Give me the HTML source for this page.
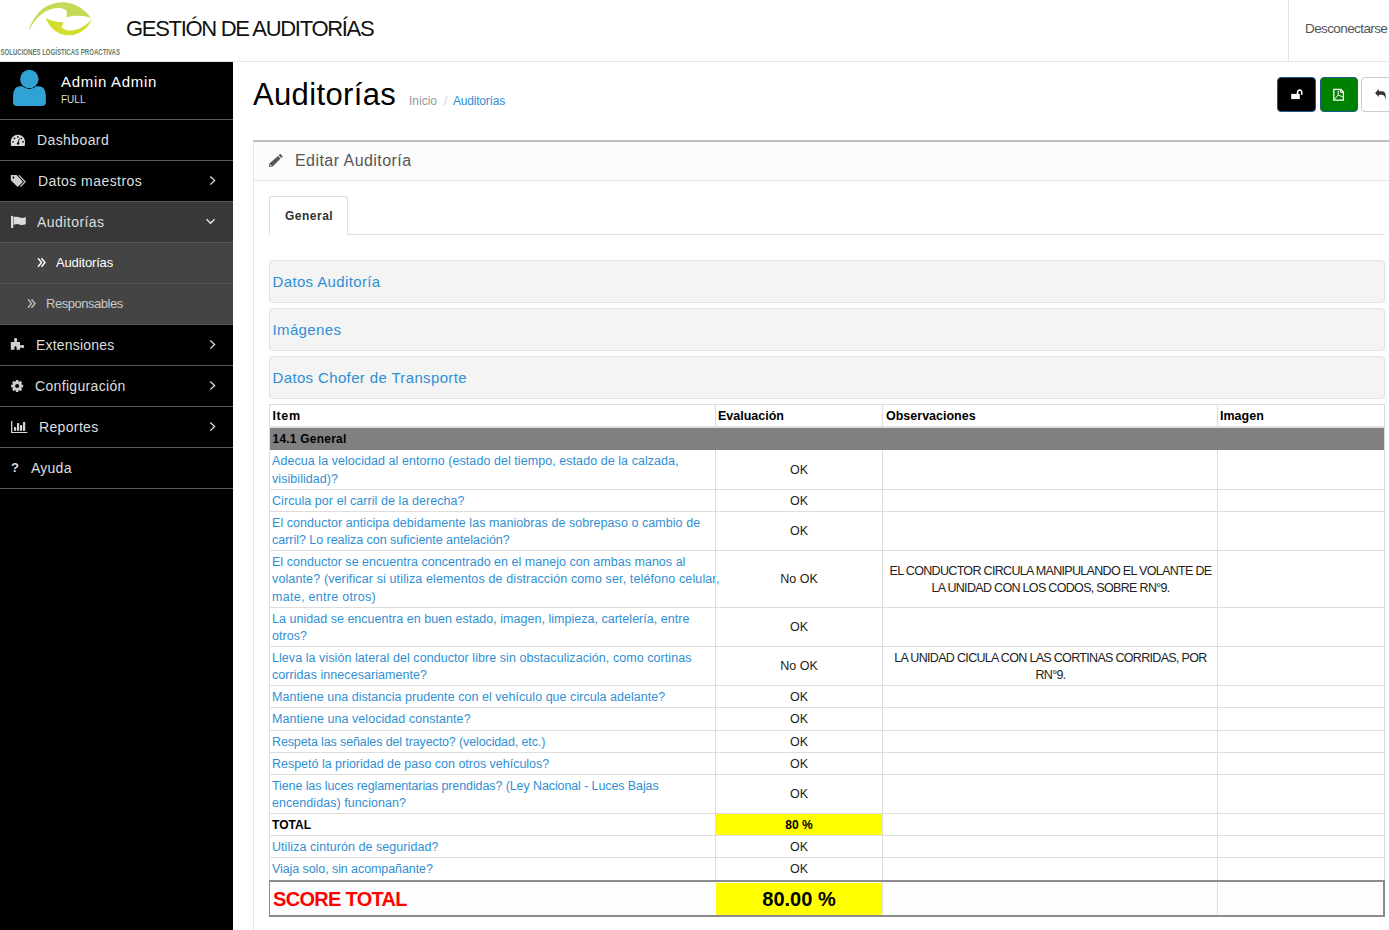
<!DOCTYPE html>
<html><head><meta charset="utf-8">
<style>
*{box-sizing:border-box;margin:0;padding:0}
html,body{width:1389px;height:930px;overflow:hidden;background:#fff;font-family:"Liberation Sans",sans-serif;color:#333}
.abs{position:absolute;white-space:nowrap}
#sb{position:absolute;left:0;top:62px;width:233px;height:868px;background:#000}
.mi{position:absolute;left:0;width:233px;height:41px;border-bottom:1px solid #595959;background:#000}
.mi .t{position:absolute;white-space:nowrap;color:#dedede;font-size:14px;line-height:16px}
.mi svg{position:absolute}
.acc{position:absolute;left:269px;width:1116px;height:43px;background:#f4f4f4;border:1px solid #e2e2e2;border-radius:4px}
.acc span{position:absolute;left:2.5px;top:12px;letter-spacing:0.36px;font-size:15px;line-height:18px;color:#2f8fd3;white-space:nowrap}
.tl{position:absolute;left:269px;width:1116px;height:1px;background:#ddd}
.vl{position:absolute;width:1px;background:#ddd}
.hrow{position:absolute;left:269px;width:1116px}
.hrow span{position:absolute;top:4px;font-size:12.5px;line-height:15px;font-weight:bold;color:#000;white-space:nowrap}
.grp{letter-spacing:0.22px;font-size:12px;line-height:15px;font-weight:bold;color:#000}
.row{position:absolute;left:269px;width:1116px;border-bottom:1px solid #ddd}
.row>div{position:absolute;top:0;bottom:0;display:flex;align-items:center;font-size:12.5px;line-height:17.5px;white-space:nowrap}
.row span{position:relative;top:1px}
.row i{font-style:normal}
.row .c1{left:3px;width:443px;color:#308fd3;letter-spacing:0.06px}
.row .c2{left:447px;width:166px;justify-content:center;color:#222}
.row .c3{left:614px;width:335px;justify-content:center;text-align:center;color:#222;letter-spacing:-0.68px}
.row .c4{left:949px;width:166px}
.row.tot .c1{color:#000;font-weight:bold;font-size:12px}
.row.tot .c2{background:#ff0;font-weight:bold;font-size:12px;color:#000;left:447px;width:166px}
.score{letter-spacing:-0.7px;font-size:20px;line-height:24px;font-weight:bold;color:#f00}
.scorev{font-size:20px;line-height:24px;font-weight:bold;color:#000}
</style></head><body>

<!-- header -->
<div class="abs" style="left:0;top:61px;width:1389px;height:1px;background:#e6e6e6"></div>
<div class="abs" style="left:1288px;top:0;width:1px;height:61px;background:#e3e3e3"></div>
<div class="abs" id="title" style="left:126px;top:17px;font-size:22px;line-height:24px;color:#111;letter-spacing:-1.3px">GESTIÓN DE AUDITORÍAS</div>
<div class="abs" id="desc" style="left:1305px;top:21px;font-size:13.5px;line-height:15px;color:#555;letter-spacing:-0.6px">Desconectarse</div>

<!-- sidebar -->
<div id="sb"></div>
<div class="mi" style="top:62px;height:58px"></div>
<div class="abs" style="left:61px;top:73px;font-size:15px;line-height:17px;color:#fff;letter-spacing:0.7px">Admin Admin</div>
<div class="abs" style="left:61px;top:94px;font-size:10px;line-height:11px;color:#ddd">FULL</div>

<div class="mi" style="top:120px"><span class="t" style="left:37px;top:12px;letter-spacing:0.4px">Dashboard</span></div>
<div class="mi" style="top:161px"><span class="t" style="left:38px;top:12px;letter-spacing:0.44px">Datos maestros</span></div>
<div class="mi" style="top:202px;background:#383838;border-color:#575757"><span class="t" style="left:37px;top:12px;letter-spacing:0.45px">Auditorías</span></div>
<div class="mi" style="top:243px;background:#444;border-color:#505050"><span class="t" style="left:56px;top:12px;color:#fff;font-size:13px;letter-spacing:-0.15px">Auditorías</span></div>
<div class="mi" style="top:284px;background:#444;border-color:#575757"><span class="t" style="left:46px;top:12px;color:#c8c8c8;font-size:13px;letter-spacing:-0.47px">Responsables</span></div>
<div class="mi" style="top:325px"><span class="t" style="left:36px;top:12px;letter-spacing:0.2px">Extensiones</span></div>
<div class="mi" style="top:366px"><span class="t" style="left:35px;top:12px;letter-spacing:0.33px">Configuración</span></div>
<div class="mi" style="top:407px"><span class="t" style="left:39px;top:12px;letter-spacing:0.35px">Reportes</span></div>
<div class="mi" style="top:448px"><span class="t" style="left:31px;top:12px;letter-spacing:0.25px">Ayuda</span></div>

<!-- content -->
<div class="abs" id="ptitle" style="left:253px;top:79px;font-size:31px;line-height:32px;color:#000;letter-spacing:0.35px">Auditorías</div>
<div class="abs" style="left:409px;top:94px;font-size:12px;line-height:14px;color:#999">Inicio</div>
<div class="abs" style="left:444px;top:94px;font-size:12px;line-height:14px;color:#ccc">/</div>
<div class="abs" style="left:453px;top:94px;font-size:12px;line-height:14px;color:#308fd3;letter-spacing:-0.2px">Auditorías</div>

<div class="abs" style="left:1277px;top:77px;width:39px;height:35px;background:#000;border:1px solid #1d5c8c;border-radius:4px"></div>
<div class="abs" style="left:1320px;top:77px;width:38px;height:35px;background:#008000;border:1px solid #1d5c8c;border-radius:4px"></div>
<div class="abs" style="left:1361px;top:77px;width:40px;height:35px;background:#fff;border:1px solid #ccc;border-radius:4px"></div>

<!-- portlet -->
<div class="abs" style="left:253px;top:140px;width:1136px;height:790px;border-left:1px solid #e5e5e5;border-top:2px solid #bdbdbd"></div>
<div class="abs" style="left:254px;top:142px;width:1135px;height:39px;background:#fcfcfc;border-bottom:1px solid #e5e5e5"></div>
<div class="abs" style="left:295px;top:152px;font-size:16px;line-height:18px;color:#555;letter-spacing:0.45px">Editar Auditoría</div>

<div class="abs" style="left:269px;top:234px;width:1116px;height:1px;background:#ddd"></div>
<div class="abs" style="left:269px;top:196px;width:79px;height:39px;background:#fff;border:1px solid #ddd;border-bottom:none;border-radius:3px 3px 0 0"></div>
<div class="abs" style="left:285px;top:209px;font-size:12px;line-height:14px;font-weight:bold;color:#333;letter-spacing:0.5px">General</div>

<div class="acc" style="top:260px"><span>Datos Auditoría</span></div>
<div class="acc" style="top:308px"><span>Imágenes</span></div>
<div class="acc" style="top:356px"><span>Datos Chofer de Transporte</span></div>

<!-- ICONS -->
<svg class="abs" style="left:0;top:0" width="130" height="62" viewBox="0 0 130 62">
 <path fill="#c6d957" d="M28.8,31.2 C29.5,25 36,14 43,8.6 C49,4.5 55,2.4 62.6,2.3 C72,2.2 84,8 90.9,17.9 C85,15.3 74,14.8 66.1,17.3 C66.8,14.8 67.3,12.5 66.4,10.2 C63,8.5 60,7.9 58.9,8.1 C48,8.2 36,15 28.8,31.2 Z"/>
 <path fill="#d3dd2e" d="M45.6,17.9 C50,20.3 56,22 63.9,22.4 C62.8,24 62,25.6 61.5,27.1 C64,29.8 67,30.7 70,30.6 C79,30.5 87,25 92,19 C89,27 80,35.2 69.5,35.3 C57,35.2 49,27 45.6,17.9 Z"/>
 <text x="0.5" y="55.4" font-family="Liberation Sans" font-weight="bold" font-size="8.2" fill="#667a66" textLength="119.5" lengthAdjust="spacingAndGlyphs">SOLUCIONES LOGÍSTICAS PROACTIVAS</text>
</svg>
<svg class="abs" style="left:0;top:62px" width="60" height="57" viewBox="0 62 60 57">
 <path fill="#30a2d3" d="M13,99 C13,92 14,86.2 20.5,86.2 L38.5,86.2 C45,86.2 45.9,92 45.9,99 L45.9,102 C45.9,104.5 44.5,106 42,106 L17,106 C14.5,106 13,104.5 13,102 Z"/>
 <circle cx="29.3" cy="78.9" r="10" fill="#000"/>
 <circle cx="29.3" cy="78.9" r="9.2" fill="#30a2d3"/>
</svg>
<!-- dashboard -->
<svg class="abs" style="left:8px;top:130px" width="22" height="20" viewBox="0 0 22 20">
 <path fill="#dcdcdc" d="M3.2,16 C2.9,15 2.8,13 2.8,11.8 C2.8,7.8 6,4.7 9.9,4.7 C13.8,4.7 17,7.8 17,11.8 C17,13 16.9,15 16.6,16 Z"/>
 <g fill="#000"><circle cx="6.5" cy="8.4" r="0.85"/><circle cx="9.9" cy="6.9" r="0.85"/><circle cx="13.3" cy="8.4" r="0.85"/><circle cx="5" cy="11.8" r="0.85"/><circle cx="15" cy="11.8" r="0.85"/><circle cx="10.1" cy="13.5" r="1.25"/></g>
 <path stroke="#000" stroke-width="0.9" d="M10.1,13.5 L11.3,8.6"/>
</svg>
<!-- tag -->
<svg class="abs" style="left:8px;top:171px" width="22" height="20" viewBox="0 0 22 20">
 <path fill="#cfcfcf" d="M2.8,4.1 L8.6,4.1 L15,10.75 L9.7,15.9 L2.8,9.2 Z"/>
 <circle cx="5.4" cy="6.5" r="0.9" fill="#000"/>
 <path fill="none" stroke="#cfcfcf" stroke-width="1.2" d="M10.9,4.4 L17.1,10.75 L12.4,15.6"/>
</svg>
<!-- flag -->
<svg class="abs" style="left:8px;top:212px" width="22" height="20" viewBox="0 0 22 20">
 <rect x="3" y="3.9" width="2.2" height="12.1" fill="#dcdcdc"/>
 <path fill="#dcdcdc" d="M5.6,4.9 C8,4.4 10,4.6 12,5.6 C14,6.4 16,5.6 17.8,4.9 L17.8,12.2 C16,12.9 14,13.5 12,12.7 C10,11.8 8,11.9 5.6,12.9 Z"/>
</svg>
<!-- sub chevrons -->
<svg class="abs" style="left:26px;top:252px" width="24" height="20" viewBox="0 0 24 20">
 <path fill="none" stroke="#fff" stroke-width="1.5" d="M12,6.2 L15.5,10.5 L12,14.8 M15.5,6.2 L19,10.5 L15.5,14.8"/>
</svg>
<svg class="abs" style="left:16px;top:293px" width="24" height="20" viewBox="0 0 24 20">
 <path fill="none" stroke="#bdbdbd" stroke-width="1.4" d="M12,6.2 L15.5,10.5 L12,14.8 M15.5,6.2 L19,10.5 L15.5,14.8"/>
</svg>
<!-- puzzle -->
<svg class="abs" style="left:8px;top:335px" width="22" height="20" viewBox="0 0 22 20">
 <path fill="#cfcfcf" d="M2.8,7.1 L6.3,7.1 L6.3,5.5 C5.7,5 5.8,3 7.6,3 C9.4,3 9.5,5 8.9,5.5 L8.9,7.1 L12,7.1 L12,10.2 L14,10.2 C14.6,9.7 16.2,10 16.2,11.5 C16.2,13 14.6,13.3 14,12.8 L12,12.8 L12,14.8 L8.6,14.8 L8.6,12.5 C8.6,11.6 8,11.2 7.5,11.2 C7,11.2 6.5,11.6 6.5,12.5 L6.5,14.8 L2.8,14.8 Z"/>
</svg>
<!-- gear -->
<svg class="abs" style="left:8px;top:376px" width="22" height="20" viewBox="0 0 22 20">
 <g transform="translate(9.1,10)" fill="#cfcfcf">
  <circle r="4.7"/>
  <rect x="-1.3" y="-6" width="2.6" height="12"/>
  <rect x="-1.3" y="-6" width="2.6" height="12" transform="rotate(45)"/>
  <rect x="-1.3" y="-6" width="2.6" height="12" transform="rotate(90)"/>
  <rect x="-1.3" y="-6" width="2.6" height="12" transform="rotate(135)"/>
  <circle r="2" fill="#000"/>
 </g>
</svg>
<!-- chart -->
<svg class="abs" style="left:8px;top:417px" width="22" height="20" viewBox="0 0 22 20" fill="#d6d6d6">
 <rect x="3" y="4.1" width="1.3" height="11.9"/><rect x="3" y="15" width="16.4" height="1"/>
 <rect x="6" y="10.1" width="2.2" height="3.7"/><rect x="9" y="6.1" width="2.2" height="7.7"/><rect x="12" y="8.1" width="2.2" height="5.7"/><rect x="15" y="5" width="2.2" height="8.8"/>
</svg>
<!-- question -->
<div class="abs" style="left:11px;top:460px;font-size:13px;line-height:16px;font-weight:bold;color:#ddd">?</div>
<!-- right chevrons -->
<svg class="abs" style="left:200px;top:161px" width="24" height="240" viewBox="0 0 24 240">
 <g fill="none" stroke="#e0e0e0" stroke-width="1.3">
 <path d="M10.3,15.5 L14.6,19.5 L10.3,23.6"/>
 <path d="M10.3,179.5 L14.6,183.5 L10.3,187.6"/>
 <path d="M10.3,220.5 L14.6,224.5 L10.3,228.6"/>
 </g>
</svg>
<svg class="abs" style="left:200px;top:407px" width="24" height="40" viewBox="0 0 24 40">
 <path fill="none" stroke="#e0e0e0" stroke-width="1.3" d="M10.3,15.5 L14.6,19.5 L10.3,23.6"/>
</svg>
<svg class="abs" style="left:200px;top:212px" width="24" height="20" viewBox="0 0 24 20">
 <path fill="none" stroke="#e8e8e8" stroke-width="1.4" d="M6.5,7.3 L10.5,11.3 L14.6,7.3"/>
</svg>
<!-- pencil -->
<svg class="abs" style="left:264px;top:150px" width="24" height="20" viewBox="0 0 24 20">
 <path fill="#555" d="M16.2,3.8 L18.8,6.4 L17.3,7.9 L14.7,5.3 Z"/>
 <path fill="#555" d="M14,6 L16.6,8.6 L8.6,16.6 L5,17 L5.4,13.4 Z"/>
 <path fill="#fafafa" d="M6.2,14.2 L7.8,15.8 L6.1,16 Z"/>
</svg>
<!-- button icons -->
<svg class="abs" style="left:1286px;top:84px" width="24" height="20" viewBox="0 0 24 20">
 <rect x="5.2" y="9.9" width="8.6" height="5.2" fill="#fff"/>
 <path fill="none" stroke="#fff" stroke-width="1.6" d="M11.5,10 L11.5,9 C11.5,7 12.2,6 13.65,6 C15.1,6 15.8,7 15.8,9 L15.8,10.7"/>
</svg>
<svg class="abs" style="left:1327px;top:84px" width="24" height="20" viewBox="0 0 24 20">
 <path fill="none" stroke="#fff" stroke-width="1.3" d="M6.8,5.3 L13.8,5.3 L16.4,8 L16.4,16.2 L6.8,16.2 Z"/>
 <path fill="none" stroke="#fff" stroke-width="1" d="M13.4,5.5 L13.4,8.3 L16.2,8.3 M11.2,6.5 L11.2,11 L15.6,12.8 M11.2,11 L7.5,15.2"/>
</svg>
<svg class="abs" style="left:1365px;top:84px" width="24" height="20" viewBox="0 0 24 20">
 <path fill="#333" d="M10.1,9 L13.8,4.9 L13.8,7.2 L17,7.2 C19.8,7.3 21.2,9.5 20.8,15.5 C20,12 18.8,10.8 16.5,10.8 L13.8,10.8 L13.8,12.9 Z"/>
</svg>
<!-- /ICONS -->
<!-- TABLE -->
<div class="tl" style="top:404px"></div>
<div class="hrow" style="top:405px;height:21px"><span style="left:3.5px;letter-spacing:0.6px">Item</span><span style="left:449px">Evaluación</span><span style="left:617px">Observaciones</span><span style="left:951px">Imagen</span></div>
<div class="abs" style="left:269px;top:426px;width:1116px;height:2px;background:#e0e0e0"></div>
<div class="abs" style="left:270px;top:428px;width:1114px;height:22px;background:#808080"></div>
<div class="abs grp" style="left:272.5px;top:432px">14.1 General</div>
<div class="row" style="top:450px;height:40px"><div class="c1"><span>Adecua la velocidad al entorno (estado del tiempo, estado de la calzada,<br>visibilidad)?</span></div><div class="c2"><span>OK</span></div><div class="c3"></div><div class="c4"></div></div>
<div class="row" style="top:490px;height:22px"><div class="c1"><span>Circula por el carril de la derecha?</span></div><div class="c2"><span>OK</span></div><div class="c3"></div><div class="c4"></div></div>
<div class="row" style="top:512px;height:39px"><div class="c1"><span>El conductor anticipa debidamente las maniobras de sobrepaso o cambio de<br><i style="letter-spacing:-0.030px">carril? Lo realiza con suficiente antelación?</i></span></div><div class="c2"><span>OK</span></div><div class="c3"></div><div class="c4"></div></div>
<div class="row" style="top:551px;height:57px"><div class="c1"><span><i style="letter-spacing:0.030px">El conductor se encuentra concentrado en el manejo con ambas manos al</i><br><i style="letter-spacing:0.127px">volante? (verificar si utiliza elementos de distracción como ser, teléfono celular,</i><br><i style="letter-spacing:0.290px">mate, entre otros)</i></span></div><div class="c2"><span>No OK</span></div><div class="c3"><span>EL CONDUCTOR CIRCULA MANIPULANDO EL VOLANTE DE<br>LA UNIDAD CON LOS CODOS, SOBRE RN°9.</span></div><div class="c4"></div></div>
<div class="row" style="top:608px;height:39px"><div class="c1"><span><i style="letter-spacing:0.025px">La unidad se encuentra en buen estado, imagen, limpieza, cartelería, entre</i><br>otros?</span></div><div class="c2"><span>OK</span></div><div class="c3"></div><div class="c4"></div></div>
<div class="row" style="top:647px;height:39px"><div class="c1"><span>Lleva la visión lateral del conductor libre sin obstaculización, como cortinas<br>corridas innecesariamente?</span></div><div class="c2"><span>No OK</span></div><div class="c3"><span>LA UNIDAD CICULA CON LAS CORTINAS CORRIDAS, POR<br>RN°9.</span></div><div class="c4"></div></div>
<div class="row" style="top:686px;height:22px"><div class="c1"><span><i style="letter-spacing:0.040px">Mantiene una distancia prudente con el vehículo que circula adelante?</i></span></div><div class="c2"><span>OK</span></div><div class="c3"></div><div class="c4"></div></div>
<div class="row" style="top:708px;height:23px"><div class="c1"><span>Mantiene una velocidad constante?</span></div><div class="c2"><span>OK</span></div><div class="c3"></div><div class="c4"></div></div>
<div class="row" style="top:731px;height:22px"><div class="c1"><span><i style="letter-spacing:-0.120px">Respeta las señales del trayecto? (velocidad, etc.)</i></span></div><div class="c2"><span>OK</span></div><div class="c3"></div><div class="c4"></div></div>
<div class="row" style="top:753px;height:22px"><div class="c1"><span><i style="letter-spacing:-0.015px">Respetó la prioridad de paso con otros vehículos?</i></span></div><div class="c2"><span>OK</span></div><div class="c3"></div><div class="c4"></div></div>
<div class="row" style="top:775px;height:39px"><div class="c1"><span><i style="letter-spacing:-0.100px">Tiene las luces reglamentarias prendidas? (Ley Nacional - Luces Bajas</i><br>encendidas) funcionan?</span></div><div class="c2"><span>OK</span></div><div class="c3"></div><div class="c4"></div></div>
<div class="row tot" style="top:814px;height:22px"><div class="c1"><span>TOTAL</span></div><div class="c2"><span>80 %</span></div><div class="c3"></div><div class="c4"></div></div>
<div class="row" style="top:836px;height:22px"><div class="c1"><span>Utiliza cinturón de seguridad?</span></div><div class="c2"><span>OK</span></div><div class="c3"></div><div class="c4"></div></div>
<div class="row" style="top:858px;height:23px"><div class="c1"><span><i style="letter-spacing:-0.080px">Viaja solo, sin acompañante?</i></span></div><div class="c2"><span>OK</span></div><div class="c3"></div><div class="c4"></div></div>
<div class="vl" style="left:269px;top:404px;height:24px"></div>
<div class="vl" style="left:269px;top:428px;height:22px"></div>
<div class="vl" style="left:269px;top:450px;height:430px"></div>
<div class="vl" style="left:715px;top:404px;height:24px"></div>
<div class="vl" style="left:715px;top:450px;height:430px"></div>
<div class="vl" style="left:882px;top:404px;height:24px"></div>
<div class="vl" style="left:882px;top:450px;height:430px"></div>
<div class="vl" style="left:1217px;top:404px;height:24px"></div>
<div class="vl" style="left:1217px;top:450px;height:430px"></div>
<div class="vl" style="left:1384px;top:404px;height:24px"></div>
<div class="vl" style="left:1384px;top:428px;height:22px"></div>
<div class="vl" style="left:1384px;top:450px;height:430px"></div>
<div class="abs" style="left:269px;top:880px;width:1116px;height:37px;border:2px solid #8c8c8c;border-left-width:1px;background:#fdfdfd"></div>
<div class="abs" style="left:716px;top:883px;width:166px;height:32px;background:#ff0"></div>
<div class="vl" style="left:882px;top:882px;height:33px"></div>
<div class="vl" style="left:1217px;top:882px;height:33px"></div>
<div class="abs score" style="left:273px;top:887px">SCORE TOTAL</div>
<div class="abs scorev" style="left:716px;width:166px;top:887px;text-align:center">80.00 %</div>
<!-- /TABLE -->
</body></html>
